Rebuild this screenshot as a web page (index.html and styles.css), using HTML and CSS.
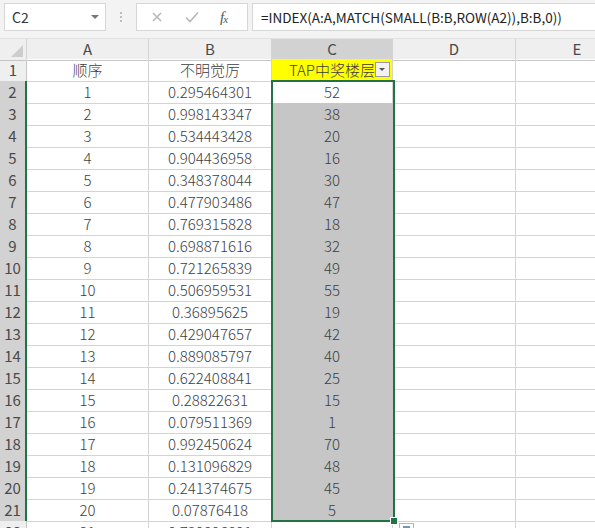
FILE: index.html
```html
<!DOCTYPE html>
<html>
<head>
<meta charset="utf-8">
<link rel="stylesheet" href="styles.css">
</head>
<body>
<div class="app">
  <div class="toolbar">
    <div class="namebox"><span class="nb-text">C2</span><span class="nb-arrow"></span></div>
    <div class="dots"><i></i><i></i><i></i></div>
    <div class="fxbox">
      <svg class="ic" width="14" height="14" viewBox="0 0 14 14"><path d="M3 3 L11 11 M11 3 L3 11" stroke="#b8b8b8" stroke-width="1.6" fill="none"/></svg>
      <svg class="ic" width="16" height="14" viewBox="0 0 16 14"><path d="M2 7.5 L6 11.5 L14 2.5" stroke="#b8b8b8" stroke-width="1.6" fill="none"/></svg>
      <span class="fx">f<sub>x</sub></span>
    </div>
    <div class="formula">=INDEX(A:A,MATCH(SMALL(B:B,ROW(A2)),B:B,0))</div>
  </div>
  <div class="sheet">
    <div class="row head">
      <div class="corner"></div>
      <div class="ch">A</div><div class="ch">B</div><div class="ch sel">C</div><div class="ch">D</div><div class="ch">E</div>
    </div>
    <div class="row">
      <div class="rh">1</div><div class="c">顺序</div><div class="c">不明觉厉</div><div class="c yellow">TAP中奖楼层<span class="filter"></span></div><div class="c"></div><div class="c"></div>
    </div>
    <div class="row"><div class="rh s">2</div><div class="c">1</div><div class="c">0.295464301</div><div class="c">52</div><div class="c"></div><div class="c"></div></div>
    <div class="row"><div class="rh s">3</div><div class="c">2</div><div class="c">0.998143347</div><div class="c g">38</div><div class="c"></div><div class="c"></div></div>
    <div class="row"><div class="rh s">4</div><div class="c">3</div><div class="c">0.534443428</div><div class="c g">20</div><div class="c"></div><div class="c"></div></div>
    <div class="row"><div class="rh s">5</div><div class="c">4</div><div class="c">0.904436958</div><div class="c g">16</div><div class="c"></div><div class="c"></div></div>
    <div class="row"><div class="rh s">6</div><div class="c">5</div><div class="c">0.348378044</div><div class="c g">30</div><div class="c"></div><div class="c"></div></div>
    <div class="row"><div class="rh s">7</div><div class="c">6</div><div class="c">0.477903486</div><div class="c g">47</div><div class="c"></div><div class="c"></div></div>
    <div class="row"><div class="rh s">8</div><div class="c">7</div><div class="c">0.769315828</div><div class="c g">18</div><div class="c"></div><div class="c"></div></div>
    <div class="row"><div class="rh s">9</div><div class="c">8</div><div class="c">0.698871616</div><div class="c g">32</div><div class="c"></div><div class="c"></div></div>
    <div class="row"><div class="rh s">10</div><div class="c">9</div><div class="c">0.721265839</div><div class="c g">49</div><div class="c"></div><div class="c"></div></div>
    <div class="row"><div class="rh s">11</div><div class="c">10</div><div class="c">0.506959531</div><div class="c g">55</div><div class="c"></div><div class="c"></div></div>
    <div class="row"><div class="rh s">12</div><div class="c">11</div><div class="c">0.36895625</div><div class="c g">19</div><div class="c"></div><div class="c"></div></div>
    <div class="row"><div class="rh s">13</div><div class="c">12</div><div class="c">0.429047657</div><div class="c g">42</div><div class="c"></div><div class="c"></div></div>
    <div class="row"><div class="rh s">14</div><div class="c">13</div><div class="c">0.889085797</div><div class="c g">40</div><div class="c"></div><div class="c"></div></div>
    <div class="row"><div class="rh s">15</div><div class="c">14</div><div class="c">0.622408841</div><div class="c g">25</div><div class="c"></div><div class="c"></div></div>
    <div class="row"><div class="rh s">16</div><div class="c">15</div><div class="c">0.28822631</div><div class="c g">15</div><div class="c"></div><div class="c"></div></div>
    <div class="row"><div class="rh s">17</div><div class="c">16</div><div class="c">0.079511369</div><div class="c g">1</div><div class="c"></div><div class="c"></div></div>
    <div class="row"><div class="rh s">18</div><div class="c">17</div><div class="c">0.992450624</div><div class="c g">70</div><div class="c"></div><div class="c"></div></div>
    <div class="row"><div class="rh s">19</div><div class="c">18</div><div class="c">0.131096829</div><div class="c g">48</div><div class="c"></div><div class="c"></div></div>
    <div class="row"><div class="rh s">20</div><div class="c">19</div><div class="c">0.241374675</div><div class="c g">45</div><div class="c"></div><div class="c"></div></div>
    <div class="row"><div class="rh s">21</div><div class="c">20</div><div class="c">0.07876418</div><div class="c g">5</div><div class="c"></div><div class="c"></div></div>
    <div class="row"><div class="rh">22</div><div class="c">21</div><div class="c">0.739096891</div><div class="c"></div><div class="c"></div><div class="c"></div></div>
    <div class="selection"><span class="handle"></span></div>
    <div class="qa"></div>
  </div>
</div>
</body>
</html>
```
FILE: styles.css
```css
html, body { margin: 0; padding: 0; background: #fff; }
body { width: 595px; height: 528px; overflow: hidden; font-family: "Noto Sans CJK SC", "Noto Sans", sans-serif; }
.app { width: 595px; height: 528px; overflow: hidden; }

.toolbar { height: 39px; background: #f3f3f3; display: flex; align-items: flex-start; box-sizing: border-box; padding-top: 3px; border-bottom: 1px solid #e2e2e2; }
.namebox { margin-left: 4px; width: 102px; height: 28px; box-sizing: border-box; background: #fff; border: 1px solid #d6d6d6; display: flex; align-items: center; justify-content: space-between; padding: 0 6px 0 7px; }
.nb-text { font-size: 14px; color: #333; }
.nb-arrow { width: 0; height: 0; border-left: 4px solid transparent; border-right: 4px solid transparent; border-top: 4px solid #777; }
.dots { width: 30px; height: 28px; display: flex; flex-direction: column; align-items: center; justify-content: center; gap: 2px; }
.dots i { display: block; width: 2px; height: 2px; background: #bdbdbd; }
.fxbox { width: 112px; height: 28px; box-sizing: border-box; background: #fff; border: 1px solid #d6d6d6; display: flex; align-items: center; padding-left: 13px; gap: 20px; }
.fx { font-family: "Liberation Serif", serif; font-style: italic; font-size: 15px; color: #555; letter-spacing: -1px; }
.fx sub { font-size: 11px; vertical-align: -1px; }
.formula { margin-left: 4px; flex: 1; height: 28px; box-sizing: border-box; background: #fff; border: 1px solid #d6d6d6; border-right: none; font-size: 13.5px; color: #222; line-height: 26px; padding-left: 8px; white-space: nowrap; overflow: hidden; }

.sheet { position: relative; }
.row { display: grid; grid-template-columns: 27px 122px 123px 121px 123px 123px; height: 22px; }
.row.head { height: 20px; background: #efefef; }
.corner { border-right: 1px solid #d4d4d4; border-bottom: 1px solid #c6c6c6; position: relative; box-sizing: border-box; }
.corner::after { content: ""; position: absolute; right: 3px; bottom: 3px; width: 0; height: 0; border-left: 12px solid transparent; border-bottom: 12px solid #cdcdcd; }
.ch { box-sizing: border-box; border-right: 1px solid #d4d4d4; border-bottom: 1px solid #c6c6c6; text-align: center; font-size: 15px; line-height: 20px; color: #4a4a4a; }
.ch.sel { background: #d2d2d2; border-bottom: 2px solid #217346; }
.rh { box-sizing: border-box; background: #efefef; border-right: 1px solid #c6c6c6; border-bottom: 1px solid #d4d4d4; text-align: center; font-size: 15px; line-height: 22px; color: #4a4a4a; }
.rh.s { background: #d2d2d2; border-right: 2px solid #217346; border-bottom-color: #bdbdbd; }
.c { box-sizing: border-box; border-right: 1px solid #d4d4d4; border-bottom: 1px solid #d4d4d4; text-align: center; font-size: 15px; line-height: 22px; color: #3e3e3e; white-space: nowrap; overflow: hidden; position: relative; font-weight: 300; }
.c.g { background: #c6c6c6; border-right-color: #c6c6c6; border-bottom-color: #e4e4e4; }
.c.yellow { background: #ffff00; }
.filter { position: absolute; right: 2px; top: 3px; width: 15px; height: 15px; box-sizing: border-box; background: #f2f2f2; border: 1px solid #9a9a9a; }
.filter::after { content: ""; position: absolute; left: 3px; top: 5px; width: 0; height: 0; border-left: 3.5px solid transparent; border-right: 3.5px solid transparent; border-top: 3.5px solid #555; }

.selection { position: absolute; left: 271px; top: 41px; width: 124px; height: 442px; box-sizing: border-box; border: 2px solid #217346; pointer-events: none; }
.handle { position: absolute; right: -5px; bottom: -5px; width: 6px; height: 6px; background: #217346; border: 1px solid #fff; }
.qa { position: absolute; left: 399px; top: 484px; width: 15px; height: 12px; box-sizing: border-box; border: 1px solid #b8b8b8; background: #fff; }
.qa::after { content: ""; position: absolute; left: 3px; top: 2px; width: 7px; height: 3px; background: #7a93b8; }
```
